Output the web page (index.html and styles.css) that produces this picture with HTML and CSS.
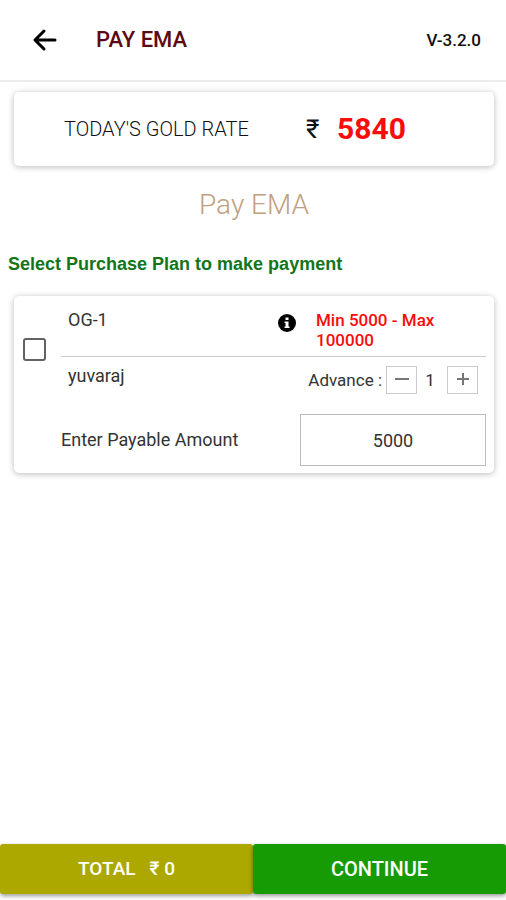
FILE: index.html
```html
<!DOCTYPE html>
<html lang="en">
<head>
<meta charset="utf-8">
<meta name="viewport" content="width=device-width, initial-scale=1">
<title>Pay EMA</title>
<link rel="stylesheet" href="styles.css">
</head>
<body>
<header class="topbar">
  <button class="back" type="button" aria-label="Back">
    <svg width="26" height="24" viewBox="0 0 26 24" fill="none" stroke="#000" stroke-width="3" stroke-linecap="round" stroke-linejoin="round"><path d="M23 12H3M12 3L3 12l9 9"/></svg>
  </button>
  <h1 class="title">PAY EMA</h1>
  <span class="version">V-3.2.0</span>
</header>
<main class="content">
  <section class="card rate">
    <span class="rate-label">TODAY'S GOLD RATE</span>
    <span class="rupee">₹</span>
    <strong class="rate-value">5840</strong>
  </section>
  <h2 class="heading">Pay EMA</h2>
  <p class="hint">Select Purchase Plan to make payment</p>
  <section class="card plan">
    <div class="select"><input class="check" type="checkbox" aria-label="Select plan OG-1"></div>
    <div class="row row-plan">
      <span class="plan-name">OG-1</span>
      <button class="info" type="button" aria-label="Plan details">
        <svg width="18" height="18" viewBox="0 0 18 18"><circle cx="9" cy="9" r="9"/><path fill="#fff" d="M7.500 3.500h3v2.500h-3zM6.500 7.500h4v5h1v1.500h-5v-1.500h1v-3.500h-1z"/></svg>
      </button>
      <strong class="limits">Min 5000 - Max 100000</strong>
    </div>
    <div class="row row-member">
      <span class="member">yuvaraj</span>
      <span class="advance">Advance :</span>
      <button class="step" type="button" aria-label="Decrease advance">
        <svg width="16" height="16" viewBox="0 0 16 16" stroke="#777" stroke-width="2"><path d="M1 7h14"/></svg>
      </button>
      <output class="count">1</output>
      <button class="step" type="button" aria-label="Increase advance">
        <svg width="16" height="16" viewBox="0 0 16 16" stroke="#777" stroke-width="2"><path d="M2 7h12M8 1v12"/></svg>
      </button>
    </div>
    <div class="row row-amount">
      <label class="amount-label" for="amount">Enter Payable Amount</label>
      <input class="amount" id="amount" type="text" inputmode="numeric" value="5000">
    </div>
  </section>
</main>
<footer class="actions">
  <button class="action total" type="button"><span>TOTAL</span><span>₹ 0</span></button>
  <button class="action continue" type="button">CONTINUE</button>
</footer>
</body>
</html>
```
FILE: styles.css
```css
* {
  box-sizing: border-box;
}

body {
  margin: 0;
  min-height: 100vh;
  display: flex;
  flex-direction: column;
  background: #fff;
  color: #333;
  font-family: Roboto, "Noto Sans", sans-serif;
  font-size: 18px;
  line-height: 20px;
}

button,
input {
  margin: 0;
  font: inherit;
  color: inherit;
}

svg {
  display: block;
}

.topbar {
  display: flex;
  align-items: center;
  height: 82px;
  padding: 0 25px 0 32px;
  border-bottom: 2px solid #ececec;
}

.back,
.info {
  padding: 0;
  border: 0;
  background: none;
}

.title {
  flex: 1;
  margin: 0 0 0 38px;
  color: #5c0a10;
  font-size: 22px;
  font-weight: 500;
  line-height: 24px;
}

.version {
  color: #111;
  font-size: 17px;
  font-weight: 500;
}

.content {
  flex: 1;
  padding: 10px 12px 24px 14px;
}

.card {
  border-radius: 5px;
  background: #fff;
  box-shadow: 0 1px 6px rgba(0, 0, 0, 0.28);
}

.rate {
  display: flex;
  align-items: center;
  height: 74px;
  padding-left: 50px;
}

.rate-label {
  flex: 0 0 242px;
  color: #111;
  font-size: 20px;
  font-weight: 300;
}

.rupee {
  flex: 0 0 31px;
  color: #111;
  font-size: 26px;
}

.rate-value {
  color: #f80c0c;
  font-size: 30px;
  font-weight: 700;
}

.heading {
  margin: 23px 0 0;
  color: #c0a080;
  font-size: 28px;
  font-weight: 300;
  line-height: 32px;
  text-align: center;
}

.hint {
  margin: 33px 0 22px -6px;
  color: #12751a;
  font-family: "Liberation Sans", Arial, sans-serif;
  font-size: 18px;
  font-weight: 700;
}

.plan {
  display: grid;
  grid-template-columns: 47px 1fr;
  padding: 0 8px 7px 0;
}

.select {
  grid-row: span 2;
  display: flex;
  align-items: center;
  padding-left: 9px;
}

.check {
  appearance: none;
  width: 23px;
  height: 23px;
  border: 2px solid #626262;
  border-radius: 3px;
  background: #fff;
}

.row {
  grid-column: 2;
  display: flex;
}

.row-plan {
  align-items: flex-start;
  height: 61px;
  padding: 14px 0 0 7px;
  border-bottom: 1px solid #ccc;
}

.plan-name,
.member,
.amount-label {
  flex: 1;
}

.info {
  margin: 4px 20px 0 0;
}

.limits {
  flex: 0 0 170px;
  padding-right: 40px;
  color: #f80c0c;
  font-size: 17px;
  font-weight: 500;
}

.row-member {
  align-items: center;
  height: 45px;
  padding: 0 8px 0 7px;
}

.member {
  align-self: flex-start;
  padding-top: 9px;
}

.advance,
.count {
  font-size: 17px;
}

.advance {
  margin-right: 4px;
}

.step {
  display: grid;
  place-items: center;
  width: 31px;
  height: 28px;
  padding: 0;
  border: 1px solid #ccc;
  background: #fff;
}

.count {
  width: 30px;
  padding-right: 4px;
  text-align: center;
}

.row-amount {
  align-items: center;
  padding-top: 12px;
}

.amount {
  flex: 0 0 186px;
  width: 186px;
  height: 52px;
  padding: 0;
  border: 1px solid #bbb;
  border-radius: 0;
  background: #fff;
  text-align: center;
}

.actions {
  display: grid;
  grid-template-columns: 1fr 1fr;
  padding-bottom: 6px;
}

.action {
  display: flex;
  align-items: center;
  justify-content: center;
  gap: 14px;
  height: 50px;
  padding: 0;
  border: 0;
  border-radius: 3px;
  color: #fff;
  font-size: 19px;
  font-weight: 500;
  box-shadow: 0 2px 4px rgba(0, 0, 0, 0.4);
}

.total {
  background: #aca800;
}

.continue {
  background: #169b04;
  font-size: 20px;
}
```
